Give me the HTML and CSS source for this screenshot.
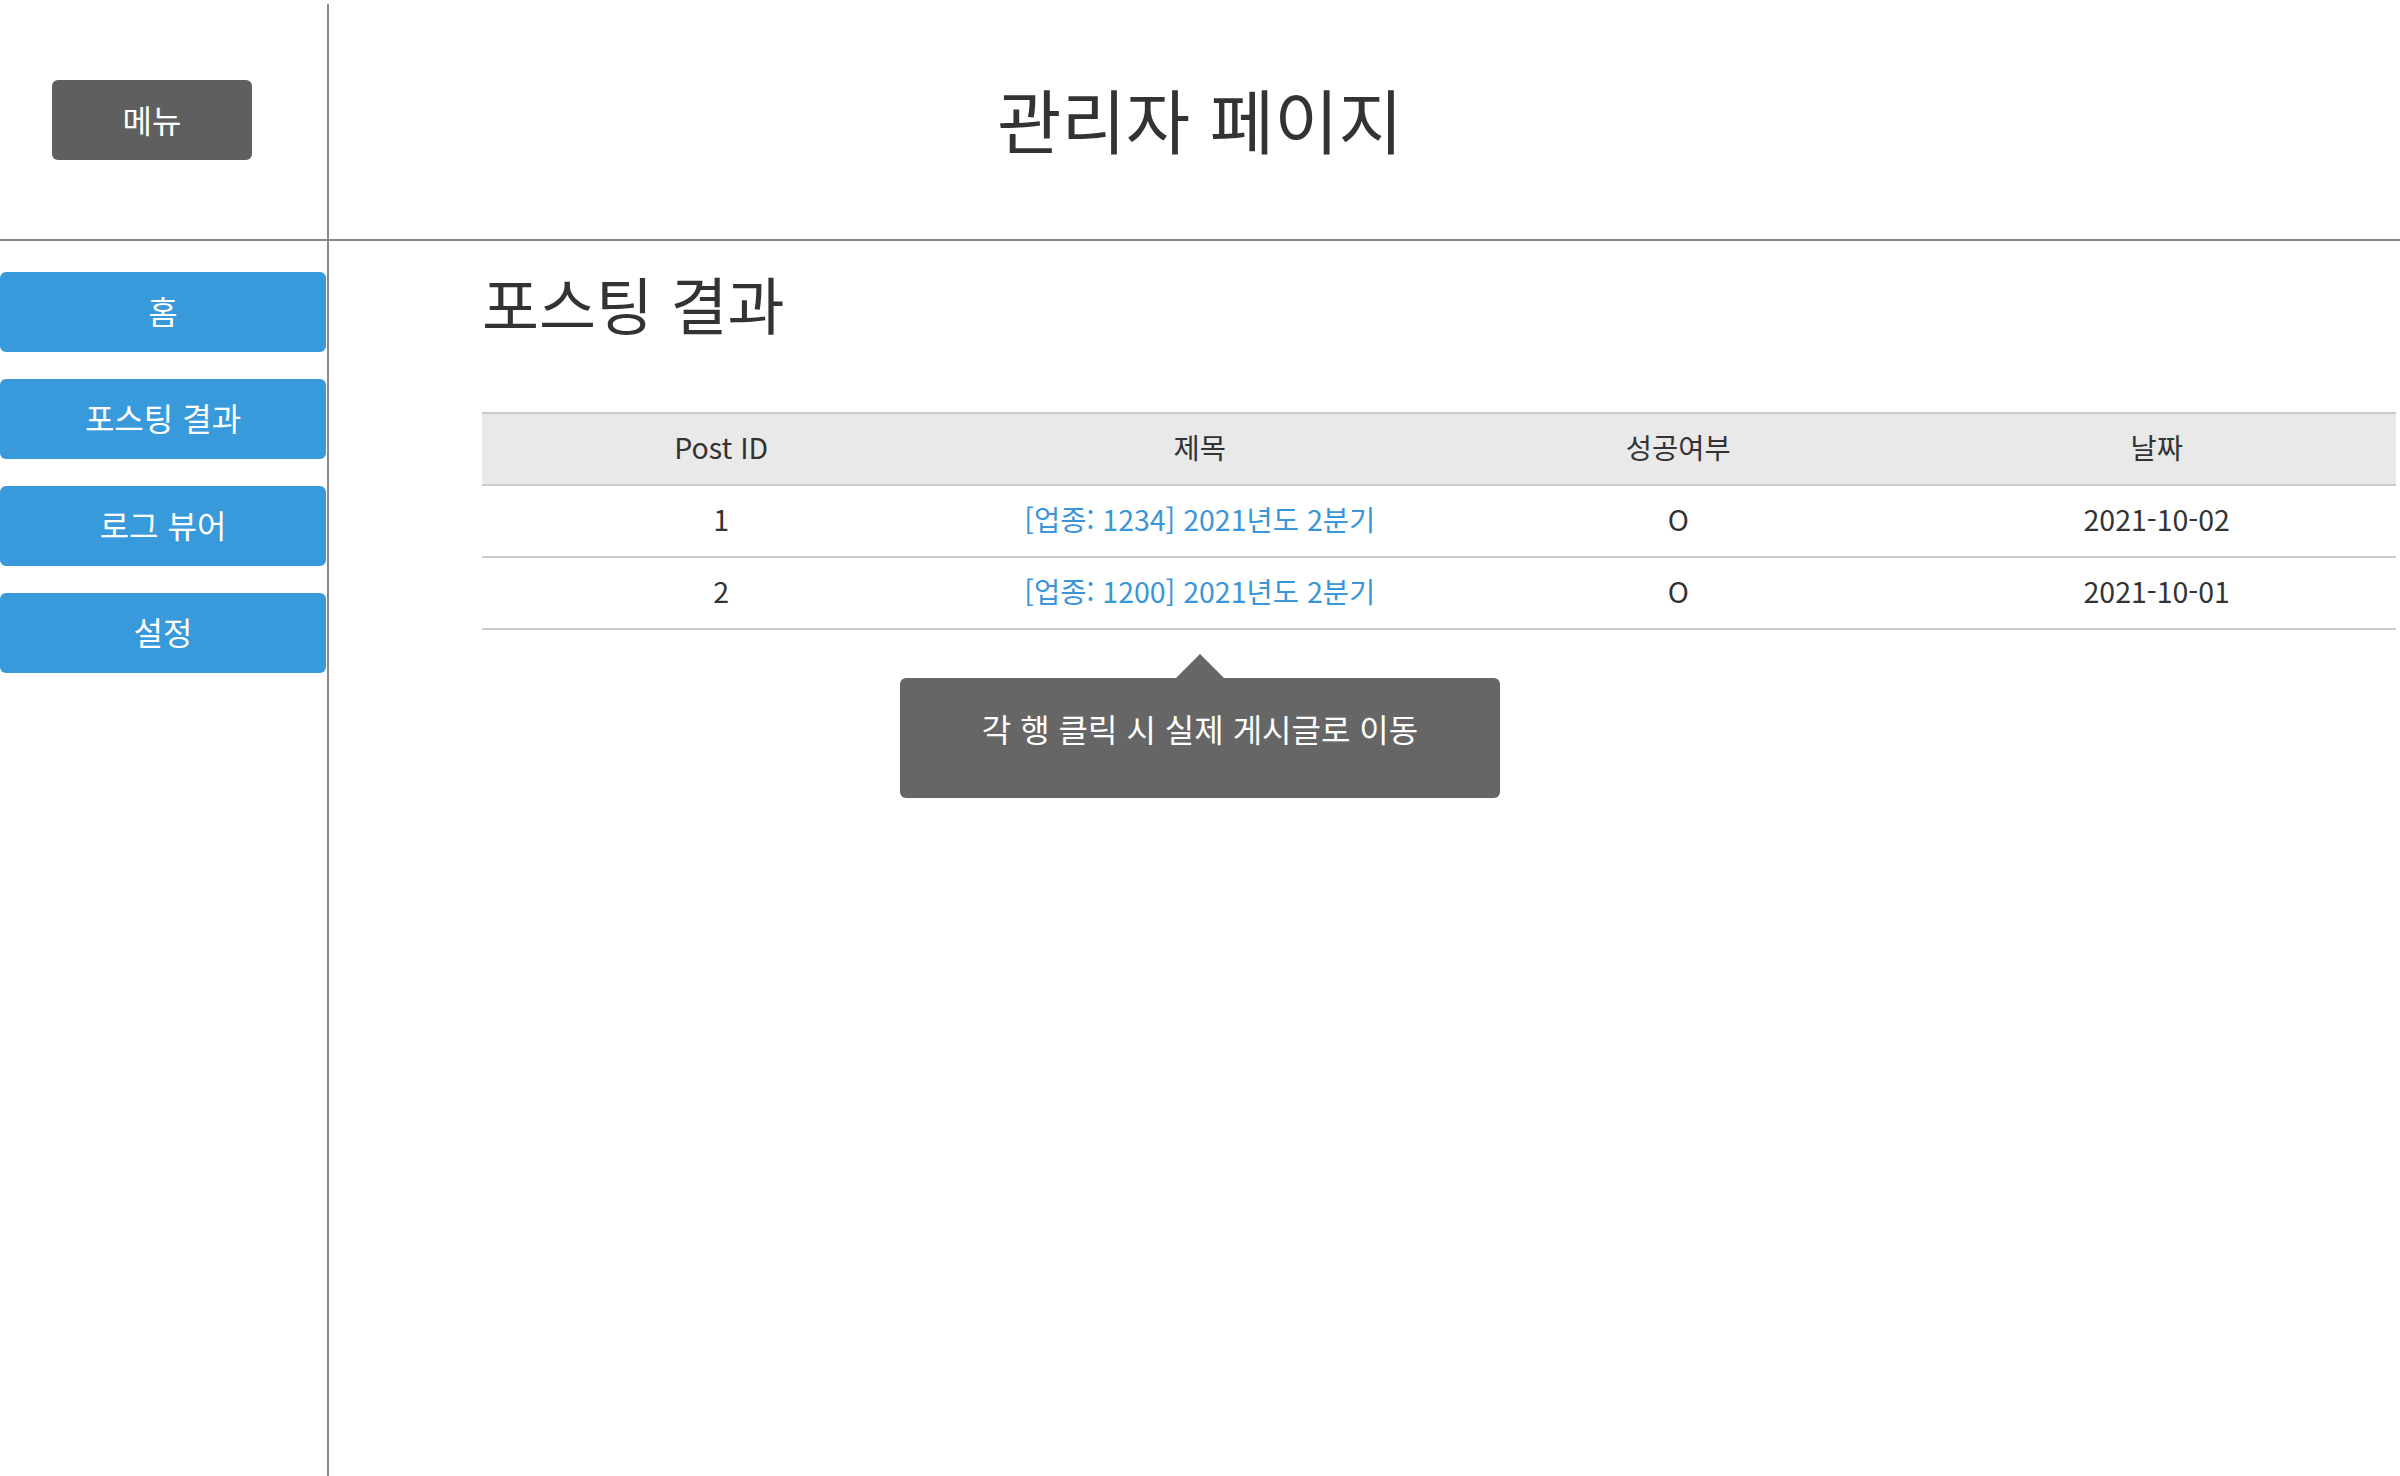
FILE: index.html
```html
<!DOCTYPE html>
<html lang="ko">
<head>
<meta charset="utf-8">
<title>관리자 페이지</title>
<link rel="stylesheet" href="styles.css">
</head>
<body>
<div class="app">
  <div class="header-left">
    <button class="menu-btn">메뉴</button>
  </div>
  <header class="header-main">
    <h1 class="page-title">관리자 페이지</h1>
  </header>
  <nav class="sidebar">
    <a class="nav-btn" href="#">홈</a>
    <a class="nav-btn" href="#">포스팅 결과</a>
    <a class="nav-btn" href="#">로그 뷰어</a>
    <a class="nav-btn" href="#">설정</a>
  </nav>
  <main class="content">
    <h2 class="section-title">포스팅 결과</h2>
    <table class="result-table">
      <thead>
        <tr><th>Post ID</th><th>제목</th><th>성공여부</th><th>날짜</th></tr>
      </thead>
      <tbody>
        <tr><td>1</td><td><a class="post-link" href="#">[업종: 1234] 2021년도 2분기</a></td><td>O</td><td>2021-10-02</td></tr>
        <tr><td>2</td><td><a class="post-link" href="#">[업종: 1200] 2021년도 2분기</a></td><td>O</td><td>2021-10-01</td></tr>
      </tbody>
    </table>
    <div class="tooltip">각 행 클릭 시 실제 게시글로 이동</div>
  </main>
</div>
</body>
</html>
```
FILE: styles.css
```css
* { box-sizing: border-box; }
html, body {
  margin: 0;
  padding: 0;
  background: #ffffff;
  font-family: "Noto Sans CJK KR", "Noto Sans", sans-serif;
  color: #333333;
}
.app {
  display: grid;
  grid-template-columns: 329px 1fr;
  grid-template-rows: 237px 1fr;
  min-height: 1476px;
  padding-top: 4px;
}
.header-left {
  border-right: 2px solid #888888;
  border-bottom: 2px solid #888888;
  padding: 76px 0 0 52px;
}
.menu-btn {
  width: 200px;
  height: 80px;
  border: none;
  border-radius: 6px;
  background: #5f5f5f;
  color: #ffffff;
  font-family: "Noto Sans CJK KR", sans-serif;
  font-size: 32px;
  padding: 0 0 3px 0;
}
.header-main {
  border-bottom: 2px solid #888888;
  display: flex;
  align-items: center;
  justify-content: center;
  padding: 0 329px 6px 0;
}
.page-title {
  margin: 0;
  font-size: 70px;
  font-weight: 400;
  color: #333333;
  line-height: 1;
}
.sidebar {
  border-right: 2px solid #888888;
  padding: 31px 1px 0 0;
  display: flex;
  flex-direction: column;
  gap: 27px;
}
.nav-btn {
  display: flex;
  align-items: center;
  justify-content: center;
  height: 80px;
  padding-bottom: 4px;
  background: #3899db;
  color: #ffffff;
  border-radius: 6px;
  text-decoration: none;
  font-size: 32px;
}
.content {
  position: relative;
  padding: 0 4px 0 153px;
}
.section-title {
  margin: 20px 0 0 0;
  font-size: 62px;
  font-weight: 400;
  line-height: 84px;
  color: #333333;
}
.result-table {
  width: 100%;
  margin-top: 67px;
  border-collapse: collapse;
  table-layout: fixed;
  font-size: 28.5px;
  color: #333333;
}
.result-table th,
.result-table td {
  height: 72px;
  padding: 0 0 5px 0;
  text-align: center;
  font-weight: 400;
  border-bottom: 2px solid #cccccc;
}
.result-table thead th {
  background: #e9e9e9;
  border-top: 2px solid #cccccc;
}
.post-link {
  color: #3a95d9;
  text-decoration: none;
}
.tooltip {
  position: absolute;
  left: 571px;
  top: 437px;
  width: 600px;
  height: 120px;
  background: #666666;
  color: #ffffff;
  border-radius: 6px;
  font-size: 32px;
  display: flex;
  align-items: center;
  justify-content: center;
  padding-bottom: 20px;
}
.tooltip::before {
  content: "";
  position: absolute;
  top: -24px;
  left: 276px;
  border-left: 24px solid transparent;
  border-right: 24px solid transparent;
  border-bottom: 24px solid #666666;
}
```
